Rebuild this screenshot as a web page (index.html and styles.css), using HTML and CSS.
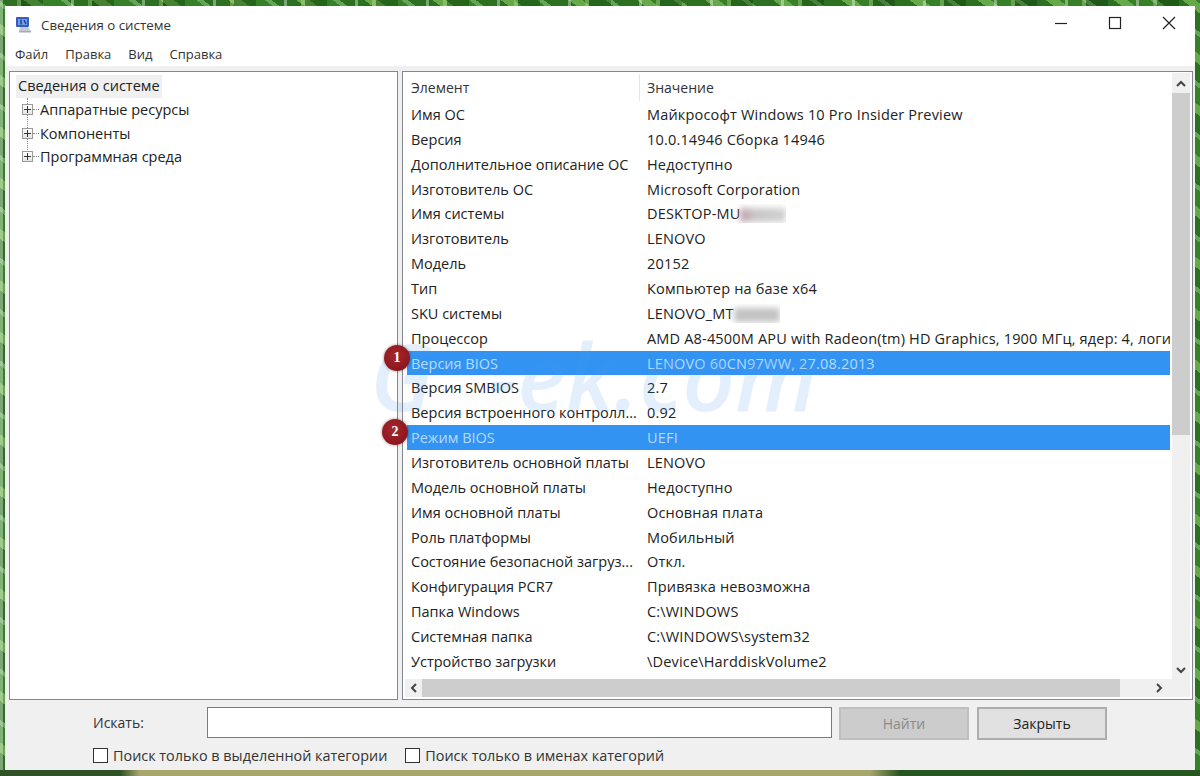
FILE: index.html

```html
<!DOCTYPE html>
<html lang="ru">
<head>
  <meta charset="UTF-8">
  <meta name="viewport" content="width=device-width, initial-scale=1.0">
  <title>Сведения о системе</title>
  <link rel="stylesheet" href="styles.css">
</head>
<body>
  <div class="window">
    <div class="titlebar">
      <svg class="app-icon" width="18" height="18" viewBox="0 0 18 18">
        <rect x="1" y="1" width="13" height="10" rx="1" fill="#3a5cc0"/>
        <rect x="3" y="3" width="9" height="6" fill="#6f9fe6"/>
        <path d="M6 3.5v5M9 4l2 4" stroke="#1c2f8f" stroke-width="1.3" fill="none"/>
        <path d="M5 11h8l3 4H4z" fill="#c3cad6"/>
        <rect x="4" y="15" width="12" height="1.5" fill="#a3abb9"/>
      </svg>
      <span class="title">Сведения о системе</span>
      <div class="controls">
        <svg width="14" height="14" viewBox="0 0 14 14"><path d="M1 7.5h12" stroke="#222" stroke-width="1.2"/></svg>
        <svg width="14" height="14" viewBox="0 0 14 14"><rect x="1.5" y="1.5" width="11" height="11" fill="none" stroke="#222" stroke-width="1.2"/></svg>
        <svg width="14" height="14" viewBox="0 0 14 14"><path d="M1 1l12 12M13 1L1 13" stroke="#222" stroke-width="1.2"/></svg>
      </div>
    </div>

    <div class="menu">
      <span>Файл</span>
      <span>Правка</span>
      <span>Вид</span>
      <span>Справка</span>
    </div>

    <div class="panes">
      <div class="tree">
        <div class="tree-root">Сведения о системе</div>
        <div class="tree-items">
          <div class="tree-item"><i class="plus"></i><i class="dash"></i>Аппаратные ресурсы</div>
          <div class="tree-item"><i class="plus"></i><i class="dash"></i>Компоненты</div>
          <div class="tree-item"><i class="plus"></i><i class="dash"></i>Программная среда</div>
        </div>
      </div>

      <div class="details">
        <div class="list-area">
          <div class="list">
            <div class="header"><span class="col-name">Элемент</span><span class="col-value head-sep">Значение</span></div>
            <div class="row"><span class="col-name">Имя ОС</span><span class="col-value">Майкрософт Windows 10 Pro Insider Preview</span></div>
            <div class="row"><span class="col-name">Версия</span><span class="col-value">10.0.14946 Сборка 14946</span></div>
            <div class="row"><span class="col-name">Дополнительное описание ОС</span><span class="col-value">Недоступно</span></div>
            <div class="row"><span class="col-name">Изготовитель ОС</span><span class="col-value">Microsoft Corporation</span></div>
            <div class="row"><span class="col-name">Имя системы</span><span class="col-value">DESKTOP-MU<i class="smudge pink"></i></span></div>
            <div class="row"><span class="col-name">Изготовитель</span><span class="col-value">LENOVO</span></div>
            <div class="row"><span class="col-name">Модель</span><span class="col-value">20152</span></div>
            <div class="row"><span class="col-name">Тип</span><span class="col-value">Компьютер на базе x64</span></div>
            <div class="row"><span class="col-name">SKU системы</span><span class="col-value">LENOVO_MT<i class="smudge"></i></span></div>
            <div class="row"><span class="col-name">Процессор</span><span class="col-value">AMD A8-4500M APU with Radeon(tm) HD Graphics, 1900 МГц, ядер: 4, логических процессоров: 4</span></div>
            <div class="row selected"><span class="col-name">Версия BIOS</span><span class="col-value">LENOVO 60CN97WW, 27.08.2013</span></div>
            <div class="row"><span class="col-name">Версия SMBIOS</span><span class="col-value">2.7</span></div>
            <div class="row"><span class="col-name">Версия встроенного контролл...</span><span class="col-value">0.92</span></div>
            <div class="row selected"><span class="col-name">Режим BIOS</span><span class="col-value">UEFI</span></div>
            <div class="row"><span class="col-name">Изготовитель основной платы</span><span class="col-value">LENOVO</span></div>
            <div class="row"><span class="col-name">Модель основной платы</span><span class="col-value">Недоступно</span></div>
            <div class="row"><span class="col-name">Имя основной платы</span><span class="col-value">Основная плата</span></div>
            <div class="row"><span class="col-name">Роль платформы</span><span class="col-value">Мобильный</span></div>
            <div class="row"><span class="col-name">Состояние безопасной загруз...</span><span class="col-value">Откл.</span></div>
            <div class="row"><span class="col-name">Конфигурация PCR7</span><span class="col-value">Привязка невозможна</span></div>
            <div class="row"><span class="col-name">Папка Windows</span><span class="col-value">C:\WINDOWS</span></div>
            <div class="row"><span class="col-name">Системная папка</span><span class="col-value">C:\WINDOWS\system32</span></div>
            <div class="row"><span class="col-name">Устройство загрузки</span><span class="col-value">\Device\HarddiskVolume2</span></div>
          </div>
          <div class="vscroll">
            <svg width="18" height="20" viewBox="0 0 18 20"><path d="M5 13l4-4 4 4" fill="none" stroke="#444" stroke-width="2"/></svg>
            <div class="vthumb"></div>
            <div class="vspace"></div>
            <svg width="18" height="20" viewBox="0 0 18 20"><path d="M5 8l4 4 4-4" fill="none" stroke="#444" stroke-width="2"/></svg>
          </div>
        </div>
        <div class="hscroll">
          <svg width="17" height="18" viewBox="0 0 17 18"><path d="M11 5L7 9l4 4" fill="none" stroke="#444" stroke-width="2"/></svg>
          <div class="hthumb"></div>
          <svg class="hright" width="18" height="18" viewBox="0 0 18 18"><path d="M7 5l4 4-4 4" fill="none" stroke="#444" stroke-width="2"/></svg>
        </div>
      </div>
    </div>

    <div class="search">
      <div class="search-row">
        <label class="search-label">Искать:</label>
        <input class="search-input" type="text">
        <button class="btn btn-off">Найти</button>
        <button class="btn">Закрыть</button>
      </div>
      <div class="check-row">
        <span class="check check-first"><i class="box"></i>Поиск только в выделенной категории</span>
        <span class="check"><i class="box"></i>Поиск только в именах категорий</span>
      </div>
    </div>
  </div>

  <div class="watermark"><span class="wm-ring">G</span>-ek.com</div>
  <div class="badge badge-one">1</div>
  <div class="badge badge-two">2</div>
</body>
</html>
```

FILE: styles.css

```css
* {
  box-sizing: border-box;
}
body {
  margin: 0;
  width: 1200px;
  height: 776px;
  overflow: hidden;
  padding: 6px 5px;
  font-family: "Open Sans", "Noto Sans", sans-serif;
  font-size: 14.5px;
  color: #222;
  background:
    linear-gradient(90deg, rgba(16,60,20,0.8) 0, rgba(16,60,20,0.8) 120px, rgba(150,150,80,0) 140px, rgba(150,150,80,0) 870px, rgba(16,70,20,0.85) 900px) 0 770px / 100% 6px no-repeat,
    linear-gradient(90deg, #a9a66c 0, #a9a66c 100%) 0 770px / 100% 6px no-repeat,
    repeating-linear-gradient(90deg, rgba(255,255,255,0.38) 0 3px, rgba(255,255,255,0) 3px 17px, rgba(220,240,170,0.3) 17px 21px, rgba(0,40,0,0.3) 21px 43px, rgba(255,255,255,0) 43px 71px),
    repeating-linear-gradient(37deg, rgba(255,255,255,0.2) 0 4px, rgba(0,40,0,0.3) 4px 19px, rgba(190,230,130,0.3) 19px 27px, rgba(0,50,0,0.15) 27px 41px),
    #3f8f2f;
}
.window {
  height: 764px;
  display: flex;
  flex-direction: column;
  background: #f0f0f0;
}
.titlebar {
  height: 36px;
  background: #fff;
  display: flex;
  align-items: center;
  padding-left: 10px;
}
.app-icon {
  margin-top: 1px;
}
.title {
  margin-left: 8px;
  margin-top: 1px;
  font-size: 13.3px;
  color: #333;
}
.controls {
  margin-left: auto;
  margin-right: 19px;
  display: flex;
  gap: 40px;
  margin-top: -2px;
}
.menu {
  height: 24px;
  background: #fff;
  display: flex;
  align-items: center;
  gap: 17px;
  padding-left: 10px;
  font-size: 13px;
  color: #333;
}
.panes {
  margin: 5px 2px 0 4px;
  height: 629px;
  display: flex;
  gap: 4px;
}
.tree {
  width: 389px;
  background: #fff;
  border: 1px solid #828790;
  padding: 3px 0 0 6px;
}
.tree-root {
  display: inline-block;
  background: #f0f0f0;
  padding: 0 2px;
  height: 23px;
  line-height: 22px;
}
.tree-items {
  margin-left: 11px;
  border-left: 1px dotted #888;
  height: 60px;
  width: 150px;
}
.tree-item {
  height: 23.5px;
  line-height: 23.5px;
  display: flex;
  align-items: center;
  white-space: nowrap;
}
.plus {
  position: relative;
  flex: none;
  width: 11px;
  height: 11px;
  margin-left: -6px;
  background: linear-gradient(#fff, #e4e4e4);
  border: 1px solid #999;
}
.plus::before {
  content: "";
  position: absolute;
  left: 1px;
  right: 1px;
  top: 4px;
  height: 1px;
  background: #333;
}
.plus::after {
  content: "";
  position: absolute;
  top: 1px;
  bottom: 1px;
  left: 4px;
  width: 1px;
  background: #333;
}
.dash {
  flex: none;
  width: 6px;
  margin-right: 1px;
  border-top: 1px dotted #888;
}
.details {
  width: 791px;
  background: #fff;
  border: 1px solid #828790;
  padding: 1px 2px 2px 4px;
  display: flex;
  flex-direction: column;
}
.list-area {
  flex: 1;
  display: flex;
  min-height: 0;
}
.list {
  width: 763px;
  margin-right: 2px;
  overflow: hidden;
}
.header {
  height: 29px;
  display: flex;
  align-items: center;
  font-size: 14px;
  color: #333;
}
.row {
  height: 24.86px;
  display: flex;
  align-items: center;
  white-space: nowrap;
}
.col-name {
  flex: none;
  width: 240px;
  padding-left: 4px;
}
.col-value {
  overflow: hidden;
}
.row .col-value {
  letter-spacing: 0.18px;
}
.head-sep {
  position: relative;
  overflow: visible;
}
.head-sep::before {
  content: "";
  position: absolute;
  left: -8px;
  top: -4px;
  bottom: -4px;
  border-left: 1px solid #e5e5e5;
}
.selected {
  background: #3393f3;
  color: #b3dbff;
}
.smudge {
  display: inline-block;
  vertical-align: middle;
  width: 46px;
  height: 14px;
  background: #c2c2c2;
  filter: blur(3px);
}
.pink {
  background: linear-gradient(90deg, #c09aa6, #c7c7c7 30%, #d0d0d0);
}
.vscroll {
  width: 18px;
  background: #f0f0f0;
  display: flex;
  flex-direction: column;
}
.vthumb {
  height: 342px;
  background: #cdcdcd;
}
.vspace {
  flex: 1;
}
.hscroll {
  height: 18px;
  margin: -1px 0 0 -2px;
  width: 785px;
  background: #f0f0f0;
  display: flex;
  align-items: center;
}
.hthumb {
  flex: none;
  width: 698px;
  height: 18px;
  background: #cdcdcd;
}
.hright {
  margin-left: auto;
  margin-right: 22px;
}
.search {
  padding: 7px 0 0 88px;
}
.search-row {
  display: flex;
  align-items: center;
  height: 33px;
}
.search-label {
  width: 114px;
  margin-top: -3px;
  font-size: 14px;
  color: #333;
}
.search-input {
  width: 625px;
  height: 31px;
  margin-top: -2px;
  background: #fff;
  border: 1px solid #7a7a7a;
  outline: none;
}
.btn {
  width: 130px;
  height: 33px;
  margin-left: 7px;
  font: inherit;
  font-size: 14px;
  color: #222;
  background: #e1e1e1;
  border: 2px solid #adadad;
}
.btn + .btn {
  margin-left: 8px;
}
.btn-off {
  background: #cccccc;
  border-color: #bfbfbf;
  color: #8a8a8a;
}
.check-row {
  margin-top: 3px;
  display: flex;
  height: 24px;
  align-items: center;
  font-size: 14.4px;
  color: #333;
}
.check {
  display: flex;
  align-items: center;
}
.check-first {
  margin-right: 18px;
}
.box {
  width: 15px;
  height: 15px;
  margin-right: 5px;
  background: #fff;
  border: 1px solid #333;
}
.watermark {
  position: absolute;
  left: 370px;
  top: 326px;
  font-family: "Open Sans", sans-serif;
  font-style: italic;
  font-weight: 600;
  font-size: 92px;
  line-height: 100px;
  color: rgba(70, 150, 235, 0.15);
  pointer-events: none;
}
.wm-ring {
  margin-right: 55px;
}
.badge {
  position: absolute;
  width: 26px;
  height: 26px;
  border-radius: 50%;
  background: radial-gradient(circle at 45% 40%, #a8262c, #7d1218);
  box-shadow: 0 0 3px rgba(60, 0, 0, 0.5);
  color: #fff;
  font-family: "Liberation Serif", serif;
  font-weight: bold;
  font-size: 14px;
  line-height: 26px;
  text-align: center;
}
.badge-one {
  left: 384px;
  top: 345px;
}
.badge-two {
  left: 382px;
  top: 419px;
}
```
